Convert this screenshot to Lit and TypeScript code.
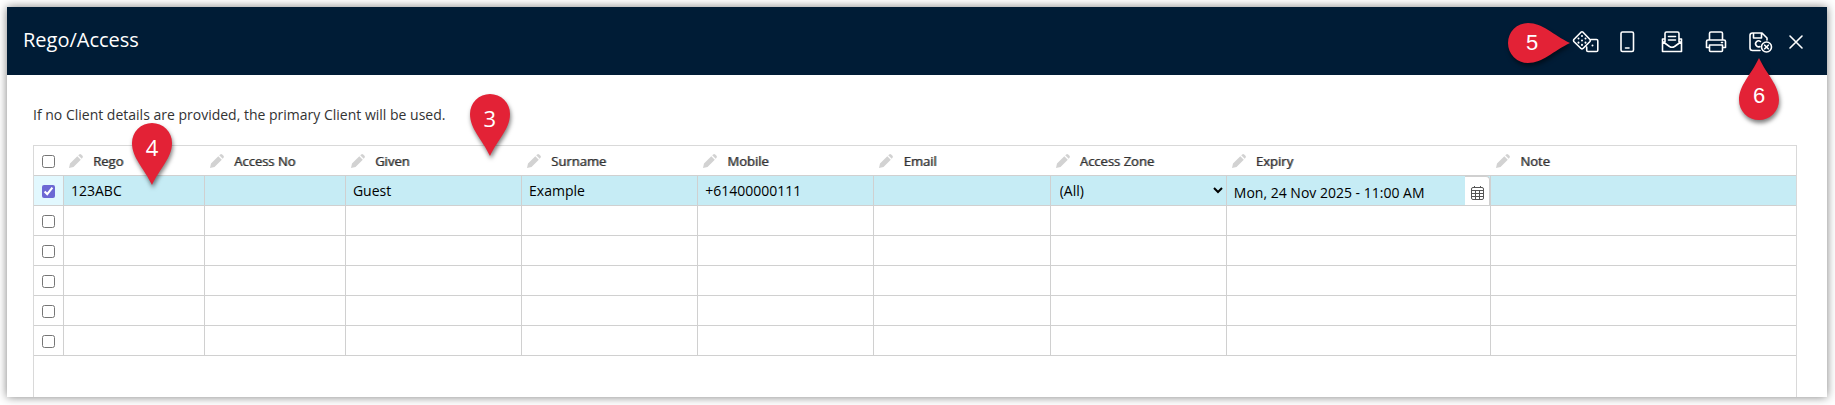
import { LitElement, html, svg, css, nothing } from "lit";
import { customElement, property, state } from "lit/decorators.js";

interface Column {
  key: string;
  label: string;
  size: string;
  pin?: string;
}

interface Guest {
  selected: boolean;
  values: Record<string, string>;
}

const COLUMNS: Column[] = [
  { key: "rego", label: "Rego", size: "c8", pin: "4" },
  { key: "accessNo", label: "Access No", size: "c8" },
  { key: "given", label: "Given", size: "c10", pin: "3" },
  { key: "surname", label: "Surname", size: "c10" },
  { key: "mobile", label: "Mobile", size: "c10" },
  { key: "email", label: "Email", size: "c10" },
  { key: "zone", label: "Access Zone", size: "c10" },
  { key: "expiry", label: "Expiry", size: "c15" },
  { key: "note", label: "Note", size: "rest" },
];

const ICONS = {
  dice: svg`<path d="M9 1.200Q10 .4 11 1.200L18 8.500Q18.700 9.500 18 10.500L11 17.500Q10 18.300 9 17.500L1.800 10.500Q1.200 9.500 1.800 8.500Z M19 8.500H24.500q1.300 0 1.300 1.300v9.400q0 1.300-1.300 1.300h-8.500q-1.300 0-1.300-1.300V16"/><path class="dots" d="M10 5v.1M10 9.400v.1M10 13.800v.1M6.500 7.400v.1M13.500 7.400v.1M6.500 11.600v.1M13.500 11.600v.1M20.500 14.500v.1"/>`,
  phone: svg`<rect x="5" y="1" width="12.500" height="19.500" rx="1.500"/><path d="M9.500 17h3.500"/>`,
  mail: svg`<path d="M5 11V2.500Q5 1 6.500 1h11Q19 1 19 2.500V11M8.500 5.500h7M8.500 9h7M5 8H2.500v12.500h19V8H19M2.500 10.500L9.500 15.500Q12 17 14.500 15.500L21.500 10.500"/>`,
  print: svg`<path d="M5.500 9V2.500Q5.500 1 7 1h10q1.500 0 1.500 1.500V9M5.500 16.500H2.500V10.500Q2.500 9 4 9h16q1.500 0 1.500 1.500v6H18.500M5.500 14h13v5.500q0 1-1 1h-11q-1 0-1-1zM17.500 11.500h1"/>`,
  save: svg`<path d="M12 19.500H4.500Q2 19.500 2 17V4.500Q2 2 4.500 2H14l5 5v2M5.500 2v5h8V2M12.500 10.500a3 3 0 1 0-.5 5"/><circle cx="18.500" cy="16" r="5"/><path d="M16.700 14.200l3.600 3.600M20.300 14.200l-3.600 3.600"/>`,
  close: svg`<path d="M6 5L18 17M18 5L6 17"/>`,
};

@customElement("map-pin")
export class MapPin extends LitElement {
  @property() label = "";
  @property({ reflect: true }) point = "down";

  static styles = css`
    :host {
      display: block;
      position: relative;
      width: 40px;
      height: 62px;
      pointer-events: none;
    }
    :host([point="right"]) {
      width: 62px;
      height: 40px;
    }
    svg {
      display: block;
      overflow: visible;
      fill: #e32236;
      filter: drop-shadow(1px 3px 2px rgba(0, 0, 0, 0.5));
    }
    .label {
      position: absolute;
      inset: 0 0 auto 0;
      box-sizing: border-box;
      height: 40px;
      padding-top: 4px;
      text-align: center;
      color: #fff;
      font: 22px/40px "Open Sans", sans-serif;
    }
    :host([point="right"]) .label {
      right: auto;
      width: 48px;
      padding-top: 0;
      font-family: "Liberation Sans", sans-serif;
    }
    :host([point="up"]) .label {
      inset: auto 0 0 0;
      height: 44px;
      padding-top: 0;
      font-family: "Liberation Sans", sans-serif;
    }
  `;

  render() {
    const drop = {
      down: "M20 62C12 45 0 35 0 20A20 20 0 0 1 40 20C40 35 28 45 20 62Z",
      up: "M20 0C12 17 0 27 0 42A20 20 0 0 0 40 42C40 27 28 17 20 0Z",
      right: "M62 20C45 12 35 0 20 0A20 20 0 0 0 20 40C35 40 45 28 62 20Z",
    }[this.point];
    const [w, h] = this.point === "right" ? [62, 40] : [40, 62];
    return html`<svg width=${w} height=${h} viewBox="0 0 ${w} ${h}" aria-hidden="true"><path d=${drop} /></svg>
      <span class="label">${this.label}</span>`;
  }
}

@customElement("app-root")
export class AppRoot extends LitElement {
  @state() private guests: Guest[] = [
    {
      selected: true,
      values: {
        rego: "123ABC",
        given: "Guest",
        surname: "Example",
        mobile: "+61400000111",
        zone: "(All)",
        expiry: "Mon, 24 Nov 2025 - 11:00 AM",
      },
    },
    ...Array.from({ length: 5 }, () => ({ selected: false, values: {} })),
  ];

  static styles = css`
    :host {
      display: block;
      box-sizing: border-box;
      min-height: 100vh;
      padding: 7px 8px 8px 7px;
      background: #fff;
      color: #333;
      font: 14px/20px "Open Sans", sans-serif;
    }
    * {
      box-sizing: border-box;
    }
    .dialog {
      display: flex;
      flex-direction: column;
      min-height: calc(100vh - 15px);
      background: #fff;
      box-shadow: 0 0 9px rgba(0, 0, 0, 0.5);
    }
    .bar {
      display: flex;
      align-items: center;
      justify-content: space-between;
      height: 68px;
      padding: 0 17px 0 16px;
      background: #001c36;
      color: #fff;
    }
    h1 {
      margin: 0;
      padding-bottom: 2px;
      font-size: 20px;
      line-height: 28px;
      font-weight: 400;
    }
    .tools {
      display: flex;
      align-items: center;
      gap: 18px;
      padding-top: 2px;
    }
    .tool {
      position: relative;
      display: block;
      width: 26px;
      height: 22px;
      padding: 0;
      border: 0;
      background: none;
      color: inherit;
    }
    .tool svg {
      display: block;
      overflow: visible;
      fill: none;
      stroke: currentColor;
      stroke-width: 1.6;
      stroke-linecap: round;
      stroke-linejoin: round;
    }
    .tool .dots {
      stroke-width: 2;
    }
    .tool:last-child {
      margin-left: -8px;
    }
    .tool map-pin {
      position: absolute;
      z-index: 2;
    }
    .tool map-pin[point="right"] {
      right: 28px;
      top: -8px;
    }
    .tool map-pin[point="up"] {
      left: -9px;
      top: 27px;
    }
    .content {
      display: flex;
      flex: 1;
      flex-direction: column;
      padding: 30px 30px 0 26px;
    }
    .hint {
      margin: 0 0 20px;
    }
    .grid {
      flex: 1;
      border: 1px solid #d9d9d9;
      border-bottom: 0;
    }
    table {
      width: 100%;
      table-layout: fixed;
      border-collapse: separate;
      border-spacing: 0;
    }
    .pick {
      width: 29px;
    }
    .c8 {
      width: 8%;
    }
    .c10 {
      width: 10%;
    }
    .c15 {
      width: 15%;
    }
    th,
    td {
      height: 30px;
      padding: 0;
      border-bottom: 1px solid #d0d0d0;
    }
    td + td {
      border-left: 1px solid #d0d0d0;
    }
    th {
      position: relative;
      text-align: left;
      font-size: 13px;
      font-weight: 400;
    }
    .head {
      display: flex;
      align-items: center;
      gap: 10px;
      padding: 1px 0 0 6px;
      line-height: 28px;
      text-shadow: 1px 0 0 rgba(51, 51, 51, 0.6);
    }
    .head svg {
      fill: #d2d2d2;
    }
    th map-pin {
      position: absolute;
      z-index: 2;
    }
    .pin-4 {
      left: 69px;
      top: -23px;
    }
    .pin-3 {
      left: 125px;
      top: -52px;
    }
    input[type="checkbox"] {
      display: block;
      width: 13px;
      height: 13px;
      margin: 1px auto 0 8px;
      accent-color: #6c68d4;
    }
    .on td {
      background: #c6ecf5;
    }
    .on td:first-child {
      background: #e2f8fe;
    }
    .field,
    select {
      display: block;
      width: 100%;
      height: 29px;
      padding: 0 7px;
      border: 0;
      outline: 0;
      border-radius: 0;
      background: none;
      color: #000;
      font: inherit;
    }
    select {
      padding: 0 5px;
    }
    .date {
      display: flex;
      height: 29px;
    }
    .date .field {
      flex: 1;
      min-width: 0;
      padding-top: 3px;
    }
    .pickdate {
      display: grid;
      place-items: center;
      flex: none;
      width: 25px;
      padding: 3px 0 0;
      border: 1px solid #d0d0d0;
      border-width: 1px 1px 0 0;
      border-radius: 0 4px 0 0;
      background: #fff;
    }
  `;

  private toggle(index: number, selected: boolean) {
    this.guests = this.guests.map((g, i) => (index < 0 || i === index ? { ...g, selected } : g));
  }

  private tool(icon: keyof typeof ICONS, label: string, pin: unknown = nothing) {
    return html`<button class="tool" type="button" aria-label=${label}>
      <svg width="26" height="22" viewBox="0 0 26 22" aria-hidden="true">${ICONS[icon]}</svg>${pin}
    </button>`;
  }

  private cell(guest: Guest, col: Column, row: number) {
    const value = guest.values[col.key] ?? "";
    const label = `${col.label}, row ${row + 1}`;
    if (guest.selected && col.key === "zone") {
      return html`<select aria-label=${label}><option>${value || "(All)"}</option></select>`;
    }
    const field = html`<input class="field" type="text" aria-label=${label} .value=${value} />`;
    if (guest.selected && col.key === "expiry") {
      return html`<div class="date">${field}
        <button class="pickdate" type="button" aria-label="Choose date">
          <svg width="13" height="14" viewBox="0 0 13 14" fill="none" stroke="#555" aria-hidden="true">
            <rect x=".5" y="1.5" width="12" height="12" rx="1.500" />
            <path d="M.5 4.500h12M.5 7.500h12M.5 10.500h12M4.500 4.500v9M8.500 4.500v9M3.500 0v2M9.500 0v2" />
          </svg>
        </button></div>`;
    }
    return field;
  }

  render() {
    return html`<main class="dialog">
      <header class="bar">
        <h1>Rego/Access</h1>
        <div class="tools">
          ${this.tool("dice", "Generate access number", html`<map-pin point="right" label="5"></map-pin>`)}
          ${this.tool("phone", "Send SMS")} ${this.tool("mail", "Send email")} ${this.tool("print", "Print")}
          ${this.tool("save", "Save and close", html`<map-pin point="up" label="6"></map-pin>`)}
          ${this.tool("close", "Close")}
        </div>
      </header>
      <section class="content">
        <p class="hint">If no Client details are provided, the primary Client will be used.</p>
        <div class="grid">
          <table>
            <thead>
              <tr>
                <th class="pick">
                  <input type="checkbox" aria-label="Select all rows"
                    @change=${(e: Event) => this.toggle(-1, (e.target as HTMLInputElement).checked)} />
                </th>
                ${COLUMNS.map(
                  (c) => html`<th class=${c.size} scope="col">
                    <div class="head">
                      <svg width="14" height="14" viewBox="0 0 14 14" aria-hidden="true">
                        <path d="M0 14L1 9.500L8.300 2.200L11.800 5.700L4.500 13ZM9.200 1.300L10.200.4Q11.200-.3 12.200 .5L13.500 1.800Q14.300 2.800 13.500 3.800L12.700 4.800Z" />
                      </svg>
                      <span>${c.label}</span>
                    </div>
                    ${c.pin ? html`<map-pin class="pin-${c.pin}" label=${c.pin}></map-pin>` : nothing}
                  </th>`
                )}
              </tr>
            </thead>
            <tbody>
              ${this.guests.map(
                (g, i) => html`<tr class=${g.selected ? "on" : ""}>
                  <td>
                    <input type="checkbox" aria-label="Select row ${i + 1}" .checked=${g.selected}
                      @change=${(e: Event) => this.toggle(i, (e.target as HTMLInputElement).checked)} />
                  </td>
                  ${COLUMNS.map((c) => html`<td>${this.cell(g, c, i)}</td>`)}
                </tr>`
              )}
            </tbody>
          </table>
        </div>
      </section>
    </main>`;
  }
}
